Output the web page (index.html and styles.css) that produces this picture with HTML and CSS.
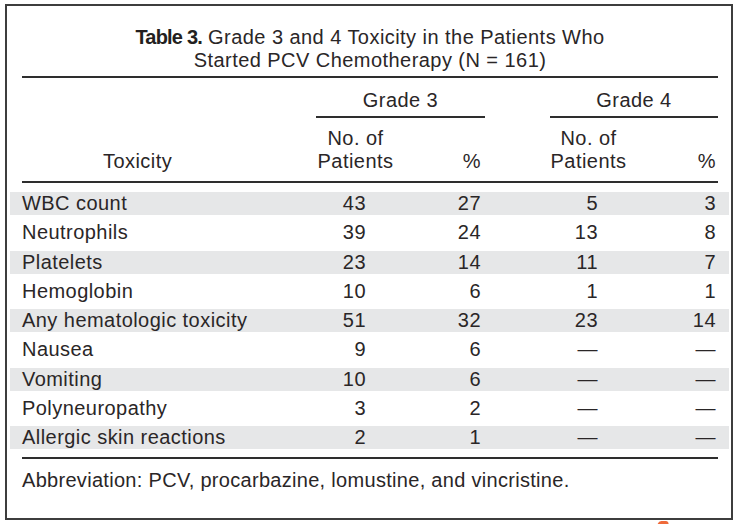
FILE: index.html
```html
<!DOCTYPE html>
<html lang="en">
<head>
<meta charset="utf-8">
<title>Table 3</title>
<link rel="stylesheet" href="styles.css">
</head>
<body>
<div class="sheet">
  <h1 class="title"><span class="label">Table 3.</span> Grade 3 and 4 Toxicity in the Patients Who<br>Started PCV Chemotherapy (N = 161)</h1>
  <div class="head">
    <div class="h-tox">Toxicity</div>
    <div class="h-grade g3">Grade 3</div>
    <div class="h-grade g4">Grade 4</div>
    <div class="h-no c2">No. of<br>Patients</div>
    <div class="h-pct c3">%</div>
    <div class="h-no c5">No. of<br>Patients</div>
    <div class="h-pct c6">%</div>
  </div>
  <div class="rows">
    <div class="row shade"><span class="name">WBC count</span><span class="n2">43</span><span class="p3">27</span><span class="n5">5</span><span class="p6">3</span></div>
    <div class="row"><span class="name">Neutrophils</span><span class="n2">39</span><span class="p3">24</span><span class="n5">13</span><span class="p6">8</span></div>
    <div class="row shade"><span class="name">Platelets</span><span class="n2">23</span><span class="p3">14</span><span class="n5">11</span><span class="p6">7</span></div>
    <div class="row"><span class="name">Hemoglobin</span><span class="n2">10</span><span class="p3">6</span><span class="n5">1</span><span class="p6">1</span></div>
    <div class="row shade"><span class="name">Any hematologic toxicity</span><span class="n2">51</span><span class="p3">32</span><span class="n5">23</span><span class="p6">14</span></div>
    <div class="row"><span class="name">Nausea</span><span class="n2">9</span><span class="p3">6</span><span class="n5">—</span><span class="p6">—</span></div>
    <div class="row shade"><span class="name">Vomiting</span><span class="n2">10</span><span class="p3">6</span><span class="n5">—</span><span class="p6">—</span></div>
    <div class="row"><span class="name">Polyneuropathy</span><span class="n2">3</span><span class="p3">2</span><span class="n5">—</span><span class="p6">—</span></div>
    <div class="row shade"><span class="name">Allergic skin reactions</span><span class="n2">2</span><span class="p3">1</span><span class="n5">—</span><span class="p6">—</span></div>
  </div>
  <p class="note">Abbreviation: PCV, procarbazine, lomustine, and vincristine.</p>
</div>
<div class="mark"></div>
</body>
</html>
```

FILE: styles.css
```css
html, body {
  margin: 0;
  padding: 0;
  background: #ffffff;
}

body {
  position: relative;
  width: 738px;
  height: 524px;
  overflow: hidden;
  font-family: "Liberation Sans", Arial, sans-serif;
  font-size: 20px;
  letter-spacing: 0.45px;
  color: #2a2627;
}

.sheet {
  box-sizing: border-box;
  width: 728px;
  height: 516px;
  margin: 4px 0 0 5px;
  padding: 0 2px 0 3px;
  border: 2px solid #3d3d3d;
  background: #ffffff;
}

.title {
  margin: 0 11px 4.5px 12px;
  padding-top: 19.5px;
  font-size: 20px;
  font-weight: normal;
  line-height: 23px;
  text-align: center;
}

.label {
  font-weight: bold;
  letter-spacing: -0.8px;
  color: #231f20;
}

.head {
  display: grid;
  grid-template-columns: 294px 79px 90px 65px 77px 91px;
  margin: 0 11px 0 12px;
  border-top: 2px solid #2e2e2e;
  border-bottom: 2px solid #2e2e2e;
  line-height: 23px;
}

.h-tox {
  grid-column: 1;
  grid-row: 1 / span 2;
  align-self: end;
  padding: 0 0 8.5px 81px;
}

.h-grade {
  grid-row: 1;
  text-align: center;
  padding: 10.5px 0 4.5px;
  border-bottom: 2px solid #2e2e2e;
}

.g3 { grid-column: 2 / span 2; }
.g4 { grid-column: 5 / span 2; }

.h-no {
  grid-row: 2;
  text-align: center;
  padding: 8.5px 0;
}

.h-pct {
  grid-row: 2;
  align-self: end;
  text-align: right;
  padding-bottom: 8.5px;
}

.c2 { grid-column: 2; }
.c3 { grid-column: 3; padding-right: 4px; }
.c5 { grid-column: 5; }
.c6 { grid-column: 6; padding-right: 2px; }

.rows {
  display: flex;
  flex-direction: column;
  gap: 6px;
  padding-top: 9px;
}

.row {
  display: grid;
  grid-template-columns: 294px 79px 90px 65px 77px 91px;
  height: 23.25px;
  align-items: center;
  padding: 0 11px 0 12px;
  line-height: 23px;
}

.shade {
  background: #e6e7e8;
}

.name { grid-column: 1; }
.n2 { grid-column: 2; text-align: right; padding-right: 29px; }
.p3 { grid-column: 3; text-align: right; padding-right: 4px; }
.n5 { grid-column: 5; text-align: right; padding-right: 29px; }
.p6 { grid-column: 6; text-align: right; padding-right: 2px; }

.note {
  margin: 7.75px 11px 0 12px;
  padding-top: 9.5px;
  border-top: 2px solid #2e2e2e;
  line-height: 23px;
  letter-spacing: 0.3px;
}

.mark {
  position: absolute;
  left: 658px;
  top: 521px;
  width: 11px;
  height: 4px;
  border-radius: 4px 6px 0 0;
  background: #ef6a3a;
  transform: skewX(-20deg);
}
```
